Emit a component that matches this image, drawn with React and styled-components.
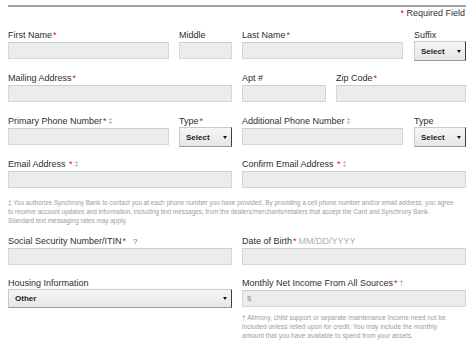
import styled, { createGlobalStyle } from 'styled-components';

const GlobalStyle = createGlobalStyle`
    html, body {
        margin: 0;
        padding: 0;
        background: #fff;
    }
    body {
        font-family: 'Liberation Sans', Arial, Helvetica, sans-serif;
        color: #333;
    }
`;

const Form = styled.div`
    width: 458px;
    padding: 5px 8px 0;
`;

const TopRule = styled.div`
    height: 2px;
    background: #a3a3a3;
`;

const RequiredNote = styled.div`
    font-size: 9px;
    line-height: 12px;
    text-align: right;
    padding-right: 1px;
`;

const Row = styled.div`
    display: grid;
    grid-template-columns: 224px 224px;
    column-gap: 10px;
    margin-top: ${(p) => p.$top}px;
`;

const Pair = styled.div`
    display: flex;
    gap: ${(p) => p.$gap || 10}px;
`;

const Field = styled.div`
    display: flex;
    flex-direction: column;
    flex: ${(p) => (p.$width ? `0 0 ${p.$width}px` : '1 1 0')};
    min-width: 0;
`;

const Label = styled.div`
    font-size: 9px;
    line-height: 12px;
    height: 12px;
    margin-bottom: 1px;
    white-space: nowrap;
    color: #2e2e2e;
`;

const Req = styled.span`
    color: #d0112b;
    font-size: 9px;
    margin-left: 1px;
`;

const Mark = styled.span`
    color: #9a9a9a;
    font-size: 7px;
    margin-left: 2px;
    vertical-align: 1px;
`;

const Help = styled.span`
    color: #666;
    font-size: 8px;
    margin-left: 7px;
`;

const Hint = styled.span`
    color: #b0b0b0;
    margin-left: 2px;
`;

const Input = styled.div`
    box-sizing: border-box;
    height: 17px;
    background: #ececec;
    border: 1px solid #d6d6d6;
    border-top-color: #cdcdcd;
    font-size: 8px;
    line-height: 15px;
    padding-left: 4px;
    color: #9a9a9a;
`;

const SelectBox = styled.div`
    box-sizing: border-box;
    height: ${(p) => p.$height || 20}px;
    margin-top: -1px;
    margin-bottom: ${(p) => 17 - (p.$height || 20) + 1}px;
    background: linear-gradient(#f6f6f6, #e6e6e6);
    border: 1px solid #cacaca;
    border-right: 1px solid #3e3e3e;
    border-bottom-color: #9a9a9a;
    display: flex;
    align-items: center;
    justify-content: space-between;
    padding: 0 4px 0 6px;
    font-size: 8px;
    font-weight: bold;
    color: #222;
`;

const Arrow = styled.span`
    width: 0;
    height: 0;
    border-left: 2px solid transparent;
    border-right: 2px solid transparent;
    border-top: 3px solid #111;
`;

const SmallPrint = styled.p`
    margin: ${(p) => p.$top}px 0 0;
    font-size: ${(p) => p.$size || 6.4}px;
    line-height: 9px;
    color: #9d9d9d;
    white-space: nowrap;
`;

const Select = ({ value = 'Select', height }) => (
    <SelectBox $height={height}>
        <span>{value}</span>
        <Arrow />
    </SelectBox>
);

export default function App() {
    return (
        <>
            <GlobalStyle />
            <Form>
                <TopRule />
                <RequiredNote>
                    <Req>*</Req> Required Field
                </RequiredNote>

                <Row $top={10}>
                    <Pair>
                        <Field>
                            <Label>First Name<Req>*</Req></Label>
                            <Input />
                        </Field>
                        <Field $width={53}>
                            <Label>Middle</Label>
                            <Input />
                        </Field>
                    </Pair>
                    <Pair $gap={11}>
                        <Field>
                            <Label>Last Name<Req>*</Req></Label>
                            <Input />
                        </Field>
                        <Field $width={52}>
                            <Label>Suffix</Label>
                            <Select />
                        </Field>
                    </Pair>
                </Row>

                <Row $top={13}>
                    <Field>
                        <Label>Mailing Address<Req>*</Req></Label>
                        <Input />
                    </Field>
                    <Pair>
                        <Field $width={84}>
                            <Label>Apt #</Label>
                            <Input />
                        </Field>
                        <Field>
                            <Label>Zip Code<Req>*</Req></Label>
                            <Input />
                        </Field>
                    </Pair>
                </Row>

                <Row $top={13}>
                    <Pair>
                        <Field>
                            <Label>Primary Phone Number<Req>*</Req><Mark>‡</Mark></Label>
                            <Input />
                        </Field>
                        <Field $width={53}>
                            <Label>Type<Req>*</Req></Label>
                            <Select />
                        </Field>
                    </Pair>
                    <Pair $gap={11}>
                        <Field>
                            <Label>Additional Phone Number<Mark>‡</Mark></Label>
                            <Input />
                        </Field>
                        <Field $width={52}>
                            <Label>Type</Label>
                            <Select />
                        </Field>
                    </Pair>
                </Row>

                <Row $top={13}>
                    <Field>
                        <Label>Email Address <Req>*</Req><Mark>‡</Mark></Label>
                        <Input />
                    </Field>
                    <Field>
                        <Label>Confirm Email Address <Req>*</Req><Mark>‡</Mark></Label>
                        <Input />
                    </Field>
                </Row>

                <SmallPrint $top={10}>
                    ‡ You authorize Synchrony Bank to contact you at each phone number you have provided. By providing a cell phone number and/or email address, you agree
                    <br />
                    to receive account updates and information, including text messages, from the dealers/merchants/retailers that accept the Card and Synchrony Bank.
                    <br />
                    Standard text messaging rates may apply.
                </SmallPrint>

                <Row $top={10}>
                    <Field>
                        <Label>Social Security Number/ITIN<Req>*</Req><Help>?</Help></Label>
                        <Input />
                    </Field>
                    <Field>
                        <Label>Date of Birth<Req>*</Req><Hint>MM/DD/YYYY</Hint></Label>
                        <Input />
                    </Field>
                </Row>

                <Row $top={12}>
                    <Field>
                        <Label>Housing Information</Label>
                        <Select value="Other" height={19} />
                    </Field>
                    <Field>
                        <Label>Monthly Net Income From All Sources<Req>*</Req><Mark>†</Mark></Label>
                        <Input>$</Input>
                        <SmallPrint $top={6} $size={6.6}>
                            † Alimony, child support or separate maintenance income need not be
                            <br />
                            included unless relied upon for credit. You may include the monthly
                            <br />
                            amount that you have available to spend from your assets.
                        </SmallPrint>
                    </Field>
                </Row>
            </Form>
        </>
    );
}
